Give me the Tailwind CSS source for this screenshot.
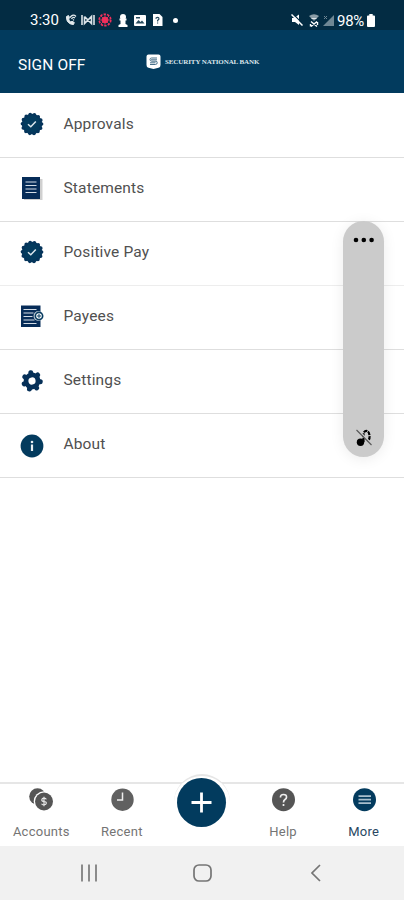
<!DOCTYPE html>
<html lang="en">
<head>
<meta charset="utf-8">
<meta name="viewport" content="width=device-width, initial-scale=1">
<title>More</title>
<script src="https://cdn.jsdelivr.net/npm/@tailwindcss/browser@4"></script>
</head>
<body class="bg-white">
<div class="relative flex h-[900px] w-[404px] flex-col overflow-hidden bg-white font-[Roboto,sans-serif] text-[#505050]">
  <div class="flex h-[30px] shrink-0 items-center bg-[#032c43] pt-[10px] pl-[30px] text-white">
    <span class="w-[35px] text-[15px] leading-5 whitespace-nowrap">3:30</span>
    <svg class="h-3 w-3 shrink-0" viewBox="0 0 12 12" fill="none" stroke="#e2e9ec"><path d="M1.500 2.500C1 7 4 10.500 8.500 10.500L9.300 8.500 7 7.300 5.800 8C4.500 7 4 6 3.800 5L4.500 3.500 3.500 1.500Z" fill="#e2e9ec"/><path d="M5 3.500Q8-.5 11 2.500M6.500 5Q8 2.500 10 4M8 6.200L9 5.500" stroke-width="1.300"/></svg>
    <svg class="ml-1 h-3 w-[14px] shrink-0" viewBox="0 0 14 12" fill="none" stroke="#dce4e8" stroke-width="1.600"><path d="M1 1v10M13 1v10M3.500 2.500v7L10.500 2.500v7L3.500 2.500"/></svg>
    <svg class="ml-[3px] h-[14px] w-[14px] shrink-0" viewBox="0 0 14 14" fill="none" stroke="#f0305c"><circle cx="7" cy="7" r="5.800" stroke-width="1.600" stroke-dasharray="2.400 1.200"/><circle cx="7" cy="7" r="3.300" fill="#f0305c" stroke="none"/><path d="M7 1v12M1 7h12M3 3l8 8M11 3l-8 8" stroke-width=".8"/></svg>
    <svg class="ml-[6px] h-[13px] w-[10px] shrink-0" viewBox="0 0 10 13" fill="#fff"><circle cx="5" cy="3" r="3"/><path d="M1.500 4.500h7v2H7.500V10L9.500 11v2H.5v-2L2.500 10V6.500h-1z"/></svg>
    <svg class="ml-[6px] h-[11px] w-3 shrink-0" viewBox="0 0 12 11"><rect width="12" height="11" rx="1" fill="#fff"/><path d="M1.500 8.500L4.500 5l2 2L8 5.500l2.500 3zM2 2h4v1.500H2z" fill="#284b5d"/></svg>
    <svg class="ml-[6px] h-3 w-[11px] shrink-0" viewBox="0 0 11 12"><path d="M1 0h6.500L10.500 3v9H1z" fill="#fff"/><path d="M4 4.700Q4 3.400 5.500 3.400T7 5L5.600 6.500v1M5.600 8.500v1" stroke="#284b5d" fill="none" stroke-width="1.200"/></svg>
    <span class="ml-[10px] h-[5px] w-[5px] shrink-0 rounded-full bg-white"></span>
    <div class="ml-auto flex items-center pr-[29px]">
      <svg class="h-3 w-3" viewBox="0 0 12 12"><path d="M1 4h2L8 .5v10.500L4 8H1z" fill="#fff"/><path d="M3 1l9 9" stroke="#032c43" stroke-width="1.200"/><path d="M.5 .5l11 11" stroke="#fff" stroke-width="1.500"/></svg>
      <svg class="ml-[6px] h-[13px] w-[10px]" viewBox="0 0 10 13"><path d="M0 2Q5-1.500 10 2L5 7z" fill="#8b9ea8"/><path d="M2 7.500l6 5M8 7.500l-6 5M1.500 10v2.500M8.500 8v3" stroke="#fff" stroke-width="1.400"/><path d="M2.500 4.500h5" stroke="#dce4e8"/></svg>
      <svg class="ml-1 h-[11px] w-[11px]" viewBox="0 0 11 11"><path d="M11 0v11H0z" fill="#6f8794"/><path d="M1 1l3 3M4 1L1 4" stroke="#6f8794"/></svg>
      <span class="ml-[3px] w-[30px] pt-px text-[15px] leading-5 tracking-[-0.3px]">98%</span>
      <svg class="h-[13px] w-[8px]" viewBox="0 0 8 13" fill="#fff"><path d="M2.300 0h3.400v1.500H7q1 0 1 1V12q0 1-1 1H1q-1 0-1-1V2.500q0-1 1-1h1.300z"/></svg>
    </div>
  </div>

  <header class="flex h-[63px] shrink-0 items-center bg-[#023b5e] pl-[18px] text-white">
    <span class="w-[128px] pt-[6px] text-[15.500px] leading-5 tracking-[0.1px]">SIGN OFF</span>
    <svg class="h-[15px] w-[15px]" viewBox="0 0 15 15"><path d="M2.500.5h10Q14.500.5 14.500 2.500v8.500Q14.500 13.500 12.500 13.800L7.500 15 2.500 13.800Q.5 13.500 .5 11V2.500Q.5.500 2.500.5z" fill="#fff"/><path d="M11 4H5.500Q4 4 4 5.500T5.500 7.200H10Q11.200 7.200 11.200 8.800T9.500 10.500H4M5 5.800h6M4 8.800h5.500" fill="none" stroke="#46708a" stroke-width="1"/></svg>
    <span class="ml-[4px] text-[7px] leading-3 font-bold tracking-[-0.1px] whitespace-nowrap text-[#dce6ec] font-['Liberation_Serif',serif]">SECURITY NATIONAL BANK</span>
  </header>

  <main class="grid shrink-0 grid-rows-6 pt-px text-[15.500px] leading-5 tracking-[0.15px]">
    <div class="flex h-16 items-center border-b border-[#dedede] pb-1 pl-5">
      <svg class="mr-[19.500px] h-6 w-6" viewBox="0 0 24 24"><circle cx="12" cy="12" r="10.300" fill="#033b5e"/><circle cx="12" cy="12" r="9.600" fill="none" stroke="#06345b" stroke-width="3.600" stroke-linecap="round" stroke-dasharray="0 4.308"/><path d="M8 12.200l2.800 2.600 5-5.300" fill="none" stroke="#dce6ec" stroke-width="1.500"/></svg>Approvals
    </div>
    <div class="flex h-16 items-center border-b border-[#dedede] pb-1 pl-5">
      <svg class="mr-[19.500px] h-6 w-6" viewBox="0 0 24 24"><path d="M4 3h18.500v21.500H4z" fill="#d0d0d0"/><path d="M2 1h18v22H2z" fill="#062c58"/><path d="M5.500 6h11M5.500 9.500h11M5.500 13h11M5.500 16.500h11" stroke="#d3dce5" stroke-width="1.200"/></svg>Statements
    </div>
    <div class="flex h-16 items-center border-b border-[#ededed] pb-1 pl-5">
      <svg class="mr-[19.500px] h-6 w-6" viewBox="0 0 24 24"><circle cx="12" cy="12" r="10.300" fill="#033b5e"/><circle cx="12" cy="12" r="9.600" fill="none" stroke="#06345b" stroke-width="3.600" stroke-linecap="round" stroke-dasharray="0 4.308"/><path d="M8 12.200l2.800 2.600 5-5.300" fill="none" stroke="#dce6ec" stroke-width="1.500"/></svg>Positive Pay
    </div>
    <div class="flex h-16 items-center border-b border-[#dedede] pb-1 pl-5">
      <svg class="mr-[19.500px] h-6 w-6" viewBox="0 0 24 24"><path d="M1 1.500h19.500v21.500H1z" fill="#062c58"/><path d="M3.500 5.500h13M3.500 9h10M3.500 12.500h9M3.500 16h11M3.500 19.500h13" stroke="#d3dce5" stroke-width="1.200"/><circle cx="18.500" cy="12" r="5" fill="#b9c7d3"/><circle cx="19" cy="12" r="3.600" fill="#fff" stroke="#073b60" stroke-width="1.600"/><path d="M19 10v4M17 12h4" stroke="#073b60"/></svg>Payees
    </div>
    <div class="flex h-16 items-center border-b border-[#dedede] pb-1 pl-5">
      <svg class="mt-[3px] mr-[19.500px] h-6 w-6" viewBox="0 0 24 24"><g transform="rotate(-8 12 12)" fill="none" stroke="#063058"><circle cx="12" cy="12" r="6" stroke-width="4.800"/><g stroke-width="5" stroke-linecap="round"><path id="tooth" d="M12 5v-1.300"/><use href="#tooth" transform="rotate(51.430 12 12)"/><use href="#tooth" transform="rotate(102.860 12 12)"/><use href="#tooth" transform="rotate(154.290 12 12)"/><use href="#tooth" transform="rotate(205.710 12 12)"/><use href="#tooth" transform="rotate(257.140 12 12)"/><use href="#tooth" transform="rotate(308.570 12 12)"/></g></g></svg>Settings
    </div>
    <div class="flex h-16 items-center border-b border-[#dedede] pb-1 pl-5">
      <svg class="mt-[4px] mr-[19.500px] h-6 w-6" viewBox="0 0 24 24"><circle cx="12" cy="12" r="11.400" fill="#033b5e"/><circle cx="12" cy="8" r="1.300" fill="#e8eff3"/><path d="M12 10.500v6.500" stroke="#e8eff3" stroke-width="2.200"/></svg>About
    </div>
  </main>

  <div class="grow"></div>

  <nav class="grid h-[64px] shrink-0 grid-cols-5 border-t-2 border-[#e6e6e6] pl-px text-center text-[13px] leading-4 tracking-[0.25px] text-[#747474]">
    <div class="flex flex-col items-center gap-3 pt-1">
      <svg class="h-6 w-[26px]" viewBox="0 0 26 24"><circle cx="9.500" cy="8.500" r="8.300" fill="#555"/><circle cx="16" cy="13.500" r="10.300" fill="#fff"/><circle cx="16" cy="13.500" r="9" fill="#555"/><path d="M18.300 11.300Q18 10.200 16 10.200T13.800 11.800 16 13.500 18.300 15.200 16 16.800 13.700 15.700M16 8.800v9.400" fill="none" stroke="#e8e8e8" stroke-width="1.200"/></svg>
      <span>Accounts</span>
    </div>
    <div class="flex flex-col items-center gap-3 pt-1">
      <svg class="h-6 w-6" viewBox="0 0 24 24"><circle cx="12.500" cy="11.700" r="11.200" fill="#606060"/><path d="M12.500 4.500V12H7" fill="none" stroke="#eee" stroke-width="1.500"/></svg>
      <span>Recent</span>
    </div>
    <div class="flex justify-center">
      <div class="-mt-[10px] flex h-[56px] w-[56px] shrink-0 items-center justify-center rounded-full border-t-2 border-[#e6e6e6] bg-white">
        <svg class="h-[50px] w-[50px]" viewBox="0 0 50 50"><circle cx="24.500" cy="24.500" r="24.500" fill="#023b5e"/><path d="M24.500 14.500v20M14.500 24.500h20" stroke="#fff" stroke-width="2.800"/></svg>
      </div>
    </div>
    <div class="flex flex-col items-center gap-3 pt-1">
      <svg class="h-6 w-6" viewBox="0 0 24 24"><circle cx="12.500" cy="11.700" r="11.500" fill="#555"/><path d="M9.500 9.500Q9.300 6.500 12.500 6.500T15.500 9.200Q15.500 10.500 14 11.500T12.500 14.500M12.500 16v2" fill="none" stroke="#eee" stroke-width="1.700"/></svg>
      <span>Help</span>
    </div>
    <div class="flex flex-col items-center gap-3 pt-1 text-[#284762]">
      <svg class="h-6 w-6" viewBox="0 0 24 24"><circle cx="12.500" cy="11.700" r="11.500" fill="#033b5e"/><path d="M6.500 8.200h12.500M6.500 11.700h12.500M6.500 15.200h12.500" stroke="#a9bfcd" stroke-width="1.700"/></svg>
      <span>More</span>
    </div>
  </nav>

  <div class="flex h-[54px] shrink-0 items-center bg-[#f1f1f1] pl-[80px]">
    <svg class="h-[18px] w-[18px]" viewBox="0 0 18 18" stroke="#808080" stroke-width="1.800"><path d="M2 .5v17M9 .5v17M16 .5v17"/></svg>
    <svg class="ml-[95px] h-[18px] w-[19px]" viewBox="0 0 19 18"><rect x="1" y="1" width="17" height="16" rx="5" fill="none" stroke="#757575" stroke-width="1.700"/></svg>
    <svg class="ml-[99px] h-[18px] w-[10px]" viewBox="0 0 10 18"><path d="M9 1L1 9l8 8" fill="none" stroke="#757575" stroke-width="1.700"/></svg>
  </div>

  <div class="absolute top-[221px] left-[343px] flex h-[236px] w-[41px] flex-col items-center justify-between rounded-full bg-[#cbcbcb] pt-[16px] pb-[10px] shadow-[0_2px_14px_rgba(0,0,0,0.08)]">
    <svg class="h-[6px] w-[22px]" viewBox="0 0 22 6"><circle cx="3" cy="3" r="2.300"/><circle cx="10.800" cy="3" r="2.300"/><circle cx="18.600" cy="3" r="2.300"/></svg>
    <svg class="h-[18px] w-[16px]" viewBox="0 0 16 18"><circle cx="4.500" cy="13.200" r="3.700"/><path d="M7.500 13V4Q9 1.500 11 2T13.500 6.500 11.500 12" fill="none" stroke="#000" stroke-width="2.200" stroke-dasharray="4 .8"/><path d="M1 0l15 15" stroke="#cbcbcb" stroke-width="1.500"/><path d="M.5 1l15 15" stroke="#555" stroke-width="1.100"/></svg>
  </div>
</div>
</body>
</html>
